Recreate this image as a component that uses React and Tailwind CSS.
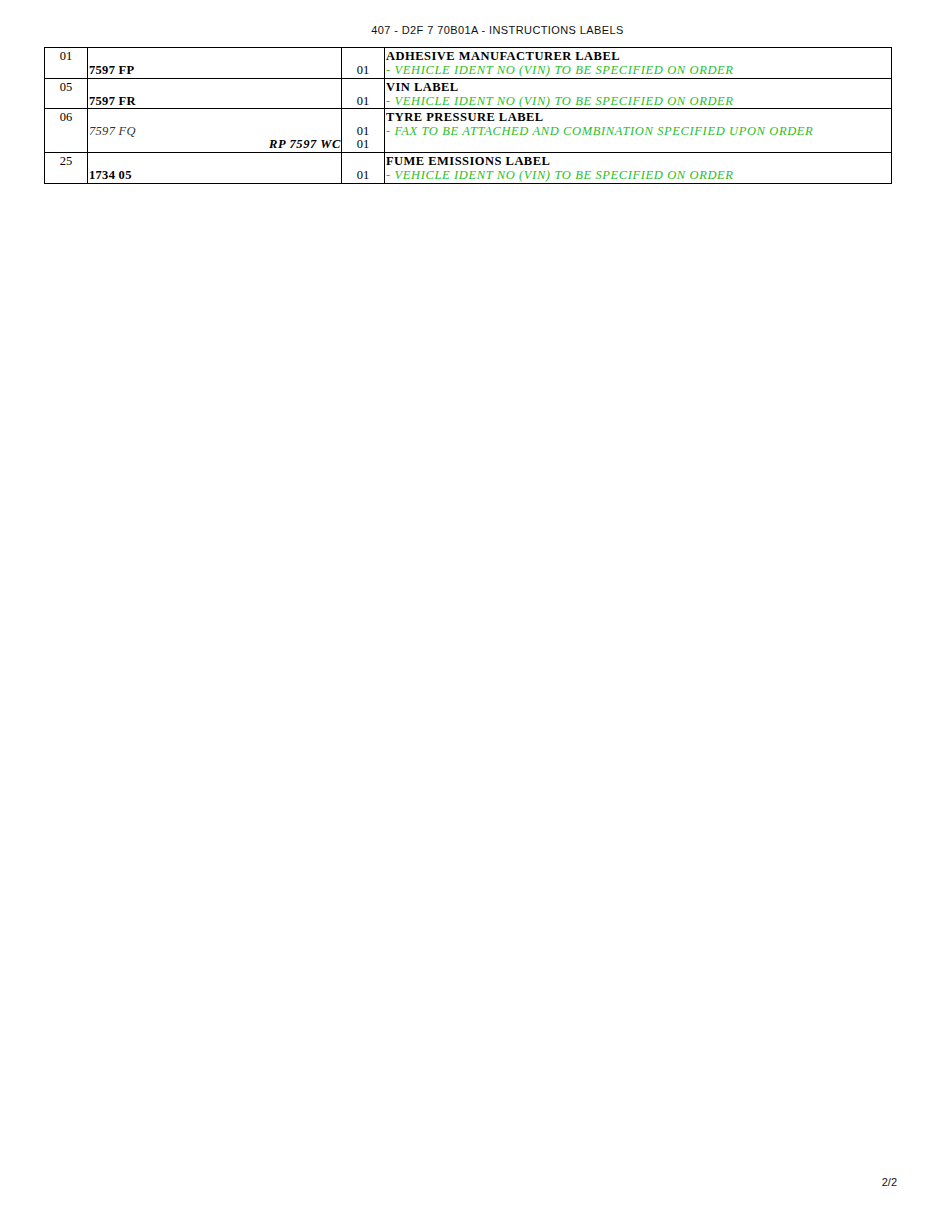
import React from "react";

const serif = { fontFamily: '"Liberation Serif", "Times New Roman", serif' };

function Line({ children, className = "" }) {
  return <div className={"h-[13.5px] leading-[13.5px] whitespace-nowrap " + className}>{children}</div>;
}

const G = "italic text-[#1fbf1f] tracking-[0.62px]";

const rows = [
  {
    h: "h-[30px]",
    idx: ["01"],
    ref: [null, <span className="font-bold tracking-[0.3px]">7597 FP</span>],
    qty: [null, "01"],
    desc: [
      <span className="font-bold tracking-[0.47px]">ADHESIVE MANUFACTURER LABEL</span>,
      <span className={G}>- VEHICLE IDENT NO (VIN) TO BE SPECIFIED ON ORDER</span>,
    ],
  },
  {
    h: "h-[29px]",
    idx: ["05"],
    ref: [null, <span className="font-bold tracking-[0.3px]">7597 FR</span>],
    qty: [null, "01"],
    desc: [
      <span className="font-bold tracking-[0.47px]">VIN LABEL</span>,
      <span className={G}>- VEHICLE IDENT NO (VIN) TO BE SPECIFIED ON ORDER</span>,
    ],
  },
  {
    h: "h-[43px]",
    idx: ["06"],
    ref: [
      null,
      <span className="italic text-[#333] tracking-[0.3px]">7597 FQ</span>,
      <div className="text-right font-bold italic tracking-[0.6px]">RP 7597 WC</div>,
    ],
    qty: [null, "01", "01"],
    desc: [
      <span className="font-bold tracking-[0.47px]">TYRE PRESSURE LABEL</span>,
      <span className={G}>- FAX TO BE ATTACHED AND COMBINATION SPECIFIED UPON ORDER</span>,
    ],
  },
  {
    h: "h-[30px]",
    idx: ["25"],
    ref: [null, <span className="font-bold tracking-[0.3px]">1734 05</span>],
    qty: [null, "01"],
    desc: [
      <span className="font-bold tracking-[0.47px]">FUME EMISSIONS LABEL</span>,
      <span className={G}>- VEHICLE IDENT NO (VIN) TO BE SPECIFIED ON ORDER</span>,
    ],
  },
];

function Cell({ lines, className }) {
  return (
    <div className={"pt-[2px] " + className}>
      {lines.map((l, i) => (
        <Line key={i}>{l}</Line>
      ))}
    </div>
  );
}

export default function App() {
  return (
    <div className="w-[935px] h-[1210px] bg-white text-black flex flex-col">
      <div
        className="pt-[24px] pl-[60px] flex justify-center text-[11px] leading-[13px] tracking-[0.4px] text-[#111]"
        style={{ fontFamily: '"Liberation Sans", Arial, sans-serif' }}
      >
        407 - D2F 7 70B01A - INSTRUCTIONS LABELS
      </div>
      <div className="mt-[10px] ml-[44px] w-[848px] border border-black text-[12.5px] text-black" style={serif}>
        {rows.map((r, i) => (
          <div key={i} className={"flex " + (i < rows.length - 1 ? "border-b border-black" : "")}>
            <Cell lines={r.idx} className={"w-[43px] border-r border-black text-center " + r.h} />
            <Cell lines={r.ref} className={"w-[254px] border-r border-black pl-[1px] " + r.h} />
            <Cell lines={r.qty} className={"w-[43px] border-r border-black text-center " + r.h} />
            <Cell lines={r.desc} className={"flex-1 pl-[1px] " + r.h} />
          </div>
        ))}
      </div>
      <div
        className="mt-auto pb-[21px] pr-[38px] flex justify-end text-[11px] leading-[13px] text-[#111]"
        style={{ fontFamily: '"Liberation Sans", Arial, sans-serif' }}
      >
        2/2
      </div>
    </div>
  );
}
